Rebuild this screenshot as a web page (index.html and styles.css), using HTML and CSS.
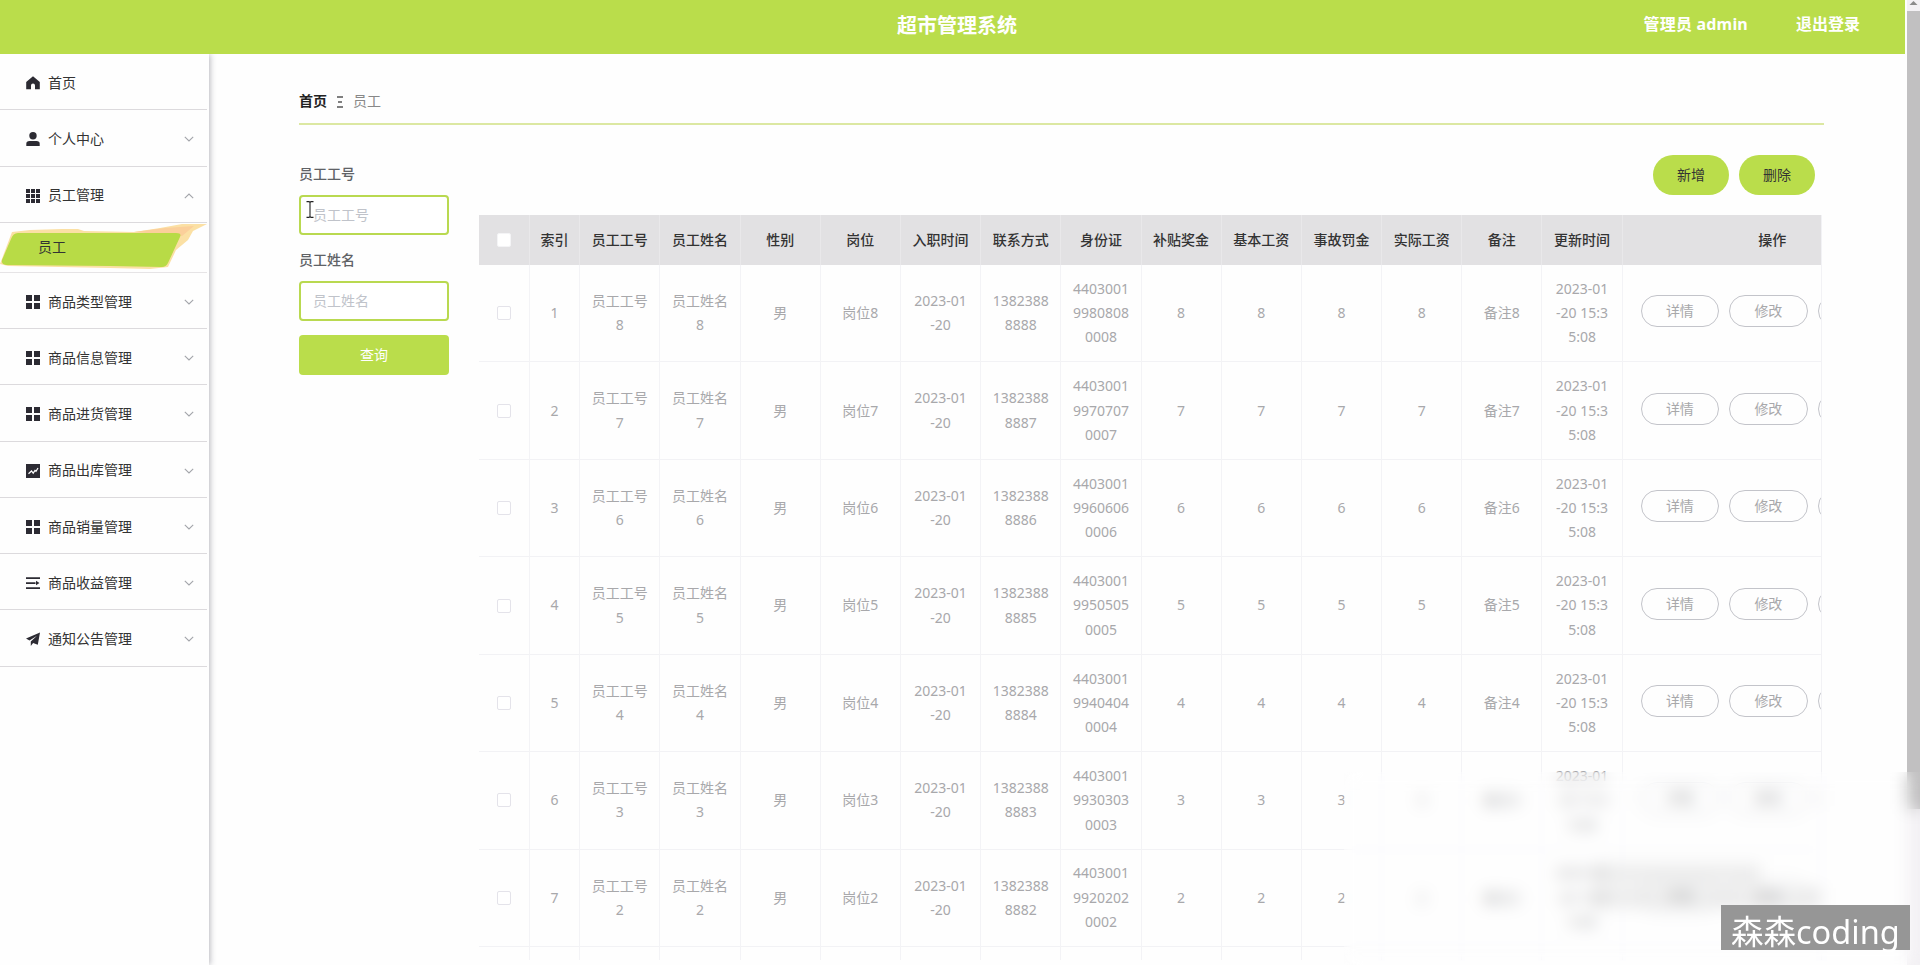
FILE: index.html
```html
<!DOCTYPE html>
<html lang="zh-CN">
<head>
<meta charset="utf-8">
<title>超市管理系统</title>
<link rel="stylesheet" href="styles.css">
</head>
<body>
<svg class="defs" aria-hidden="true">
  <symbol id="down" viewBox="0 0 10 6"><path d="M.8.8 5 5 9.200.8" fill="none" stroke="#a3a5aa" stroke-width="1.1"/></symbol>
  <symbol id="four" viewBox="0 0 14 14"><path d="M0 0h6v6H0zM8 0h6v6H8zM0 8h6v6H0zM8 8h6v6H8z"/></symbol>
</svg>
<header class="topbar">
  <div class="topbar-side"></div>
  <h1 class="brand">超市管理系统</h1>
  <div class="topbar-side account"><span>管理员 admin</span><span>退出登录</span></div>
</header>
<div class="layout">
  <nav class="sidebar">
    <div class="item"><svg class="icon" viewBox="0 0 14 14"><path d="M7 .3 13.800 6v7.200H9V9.500a2 2 0 0 0-4 0v3.700H.2V6z"/></svg><span>首页</span></div>
    <div class="item"><svg class="icon" viewBox="0 0 14 14"><circle cx="7" cy="3.700" r="3.700"/><path d="M.3 14v-2.200Q.3 9 3.500 9h7q3.200 0 3.200 2.800V14z"/></svg><span>个人中心</span><svg class="arrow"><use href="#down"/></svg></div>
    <div class="item"><svg class="icon" viewBox="0 0 14 14"><path d="M0 0h4v4H0zM5 0h4v4H5zM10 0h4v4h-4zM0 5h4v4H0zM5 5h4v4H5zM10 5h4v4h-4zM0 10h4v4H0zM5 10h4v4H5zM10 10h4v4h-4z"/></svg><span>员工管理</span><svg class="arrow up"><use href="#down"/></svg></div>
    <div class="subitem">
      <svg class="splash" viewBox="0 0 209 50">
        <path d="M12 9 30 7 62 6 78 6 84 8 134 9 160 5 182 1 207 1 193 8 188 17 176 27 168 44 150 46 110 45 8 43 0 41z" fill="#fbe0a4"/>
        <path d="M134 9 165 5 194 3 182 13 170 12z" fill="#fbcf9a"/>
        <path d="M18 10H176Q182 10 180 14L168 40Q166 44 162 44L110 43 6 42Q1 41 2 37L11 16Q13 10 18 10z" fill="#b8db46"/>
      </svg>
      <span>员工</span>
    </div>
    <div class="item"><svg class="icon"><use href="#four"/></svg><span>商品类型管理</span><svg class="arrow"><use href="#down"/></svg></div>
    <div class="item"><svg class="icon"><use href="#four"/></svg><span>商品信息管理</span><svg class="arrow"><use href="#down"/></svg></div>
    <div class="item"><svg class="icon"><use href="#four"/></svg><span>商品进货管理</span><svg class="arrow"><use href="#down"/></svg></div>
    <div class="item"><svg class="icon" viewBox="0 0 14 14"><path d="M0 0h14v14H0z"/><path d="M2.500 9.800 5.500 7l1.700 2.200L9 6.500l1 .8L12 4" fill="none" stroke="#fff" stroke-width="1.200"/></svg><span>商品出库管理</span><svg class="arrow"><use href="#down"/></svg></div>
    <div class="item"><svg class="icon"><use href="#four"/></svg><span>商品销量管理</span><svg class="arrow"><use href="#down"/></svg></div>
    <div class="item"><svg class="icon" viewBox="0 0 14 14"><path d="M0 1.200h14v1.800H0zM0 6.200h9.500v1.800H0zM0 11.200h14v1.800H0zM10 4.800 13.500 7 10 9.200z"/></svg><span>商品收益管理</span><svg class="arrow"><use href="#down"/></svg></div>
    <div class="item"><svg class="icon" viewBox="0 0 14 14"><path d="M14 .5 0 6.500l3.500 2L11 3.800 4.800 9.500V14l2.300-3 4.700 1.800z"/></svg><span>通知公告管理</span><svg class="arrow"><use href="#down"/></svg></div>
  </nav>
  <main class="main">
    <div class="crumbs"><b>首页</b><svg class="sep" viewBox="0 0 6 12"><path d="M0 1h6M1 6h4M0 11h6" stroke="#555" stroke-width="1.300"/></svg><span>员工</span></div>
    <div class="content">
      <form class="search">
        <label>员工工号</label>
        <div class="field">员工工号
          <svg class="cursor" viewBox="0 0 8 17"><path d="M.5.600H3L4 1.500 5 .600h2.500M4 1.500v14M.5 16.400H3l1-.900 1 .900h2.500" fill="none" stroke="#222" stroke-width="1.100"/></svg>
        </div>
        <label>员工姓名</label>
        <div class="field">员工姓名</div>
        <div class="query">查询</div>
      </form>
      <section class="list">
        <div class="actions"><span class="pill">新增</span><span class="pill">删除</span></div>
        <div class="table-clip">
          <table>
            <colgroup><col class="first"><col class="narrow"><col span="13" class="mid"><col class="wide"></colgroup>
            <thead><tr><th><i class="check"></i></th><th>索引</th><th>员工工号</th><th>员工姓名</th><th>性别</th><th>岗位</th><th>入职时间</th><th>联系方式</th><th>身份证</th><th>补贴奖金</th><th>基本工资</th><th>事故罚金</th><th>实际工资</th><th>备注</th><th>更新时间</th><th>操作</th></tr></thead>
            <tbody>
              <tr><td><i class="check"></i></td><td>1</td><td>员工工号<br>8</td><td>员工姓名<br>8</td><td>男</td><td>岗位8</td><td>2023-01<br>-20</td><td>1382388<br>8888</td><td>4403001<br>9980808<br>0008</td><td>8</td><td>8</td><td>8</td><td>8</td><td>备注8</td><td>2023-01<br>-20 15:3<br>5:08</td><td><div class="ops"><span>详情</span><span>修改</span><span></span></div></td></tr>
              <tr><td><i class="check"></i></td><td>2</td><td>员工工号<br>7</td><td>员工姓名<br>7</td><td>男</td><td>岗位7</td><td>2023-01<br>-20</td><td>1382388<br>8887</td><td>4403001<br>9970707<br>0007</td><td>7</td><td>7</td><td>7</td><td>7</td><td>备注7</td><td>2023-01<br>-20 15:3<br>5:08</td><td><div class="ops"><span>详情</span><span>修改</span><span></span></div></td></tr>
              <tr><td><i class="check"></i></td><td>3</td><td>员工工号<br>6</td><td>员工姓名<br>6</td><td>男</td><td>岗位6</td><td>2023-01<br>-20</td><td>1382388<br>8886</td><td>4403001<br>9960606<br>0006</td><td>6</td><td>6</td><td>6</td><td>6</td><td>备注6</td><td>2023-01<br>-20 15:3<br>5:08</td><td><div class="ops"><span>详情</span><span>修改</span><span></span></div></td></tr>
              <tr><td><i class="check"></i></td><td>4</td><td>员工工号<br>5</td><td>员工姓名<br>5</td><td>男</td><td>岗位5</td><td>2023-01<br>-20</td><td>1382388<br>8885</td><td>4403001<br>9950505<br>0005</td><td>5</td><td>5</td><td>5</td><td>5</td><td>备注5</td><td>2023-01<br>-20 15:3<br>5:08</td><td><div class="ops"><span>详情</span><span>修改</span><span></span></div></td></tr>
              <tr><td><i class="check"></i></td><td>5</td><td>员工工号<br>4</td><td>员工姓名<br>4</td><td>男</td><td>岗位4</td><td>2023-01<br>-20</td><td>1382388<br>8884</td><td>4403001<br>9940404<br>0004</td><td>4</td><td>4</td><td>4</td><td>4</td><td>备注4</td><td>2023-01<br>-20 15:3<br>5:08</td><td><div class="ops"><span>详情</span><span>修改</span><span></span></div></td></tr>
              <tr><td><i class="check"></i></td><td>6</td><td>员工工号<br>3</td><td>员工姓名<br>3</td><td>男</td><td>岗位3</td><td>2023-01<br>-20</td><td>1382388<br>8883</td><td>4403001<br>9930303<br>0003</td><td>3</td><td>3</td><td>3</td><td>3</td><td>备注3</td><td>2023-01<br>-20 15:3<br>5:08</td><td><div class="ops"><span>详情</span><span>修改</span><span></span></div></td></tr>
              <tr><td><i class="check"></i></td><td>7</td><td>员工工号<br>2</td><td>员工姓名<br>2</td><td>男</td><td>岗位2</td><td>2023-01<br>-20</td><td>1382388<br>8882</td><td>4403001<br>9920202<br>0002</td><td>2</td><td>2</td><td>2</td><td>2</td><td>备注2</td><td>2023-01<br>-20 15:3<br>5:08</td><td><div class="ops"><span>详情</span><span>修改</span><span></span></div></td></tr>
              <tr><td></td><td></td><td></td><td></td><td></td><td></td><td></td><td></td><td></td><td></td><td></td><td></td><td></td><td></td><td></td><td></td></tr>
            </tbody>
          </table>
        </div>
      </section>
    </div>
  </main>
</div>
<div class="scrollbar"><svg class="scroll-arrow" viewBox="0 0 13 11"><path d="M2.500 5 6.500 1l4 4z" fill="#8b8b8b"/></svg><div class="thumb"></div></div>
<div class="smudge smudge-a"></div>
<div class="smudge smudge-b"></div>
<div class="haze"></div>
<div class="watermark">森森coding</div>
</body>
</html>
```
FILE: styles.css
```css
* { box-sizing: border-box; }
body {
  margin: 0;
  width: 1920px;
  height: 965px;
  overflow: hidden;
  position: relative;
  background: #fefefe;
  color: #333;
  font: 14px/24.3px "Noto Sans", "Noto Sans CJK SC", sans-serif;
}
.defs { position: absolute; width: 0; height: 0; }

.topbar {
  display: flex;
  align-items: center;
  width: 1905px;
  height: 54px;
  padding: 0 45px 5px 54px;
  background: #badd4b;
  color: #fff;
}
.topbar-side { flex: 1; }
.brand { margin: 0; padding-top: 2px; font-size: 20px; line-height: 28px; font-weight: 700; }
.account {
  display: flex;
  justify-content: flex-end;
  gap: 48px;
  font-size: 16px;
  font-weight: 700;
}
.account span:first-child { letter-spacing: .2px; }

.layout { display: flex; height: 911px; }
.sidebar {
  width: 209px;
  flex: none;
  padding-right: 2px;
  background: #fefefe;
  box-shadow: 1px 0 6px rgba(40, 40, 60, .34);
  clip-path: inset(0 -14px 0 0);
}
.item {
  display: flex;
  align-items: center;
  height: 56.25px;
  padding: 3px 13px 0 26px;
  border-bottom: 1px solid #dcdadd;
}
.icon { width: 14px; height: 14px; margin-right: 8px; fill: #2c2b33; }
.arrow { width: 10px; height: 6px; margin-left: auto; }
.arrow.up { transform: rotate(180deg); }
.subitem {
  position: relative;
  height: 50px;
  padding: 12px 0 0 38px;
  border-bottom: 1px solid #e6e4e6;
}
.subitem span { position: relative; }
.splash { position: absolute; left: 0; top: 0; width: 209px; height: 50px; }

.main { width: 1696px; padding: 32px 81px 0 90px; }
.crumbs {
  display: flex;
  align-items: center;
  width: 1525px;
  height: 39px;
  padding-bottom: 6px;
  border-bottom: 2px solid #dce8a2;
  color: #888;
}
.crumbs b { color: #222; }
.sep { width: 6px; height: 12px; margin: 0 10px 0 10px; }
.content { display: flex; gap: 30px; padding-top: 30px; }

.search { display: flex; flex-direction: column; width: 150px; padding-top: 6px; }
.search label { height: 34px; padding-top: 1px; font-weight: 500; color: #606266; }
.field {
  position: relative;
  height: 40px;
  margin-bottom: 11.500px;
  padding: 6px 12px;
  border: 2px solid #b9d950;
  border-radius: 4px;
  background: #fff;
  color: #c0c3ca;
}
.cursor { position: absolute; left: 5px; top: 4px; width: 8px; height: 17px; }
.query {
  height: 40px;
  margin-top: 3px;
  border-radius: 4px;
  background: #badd4b;
  color: #fff;
  line-height: 40px;
  text-align: center;
}

.actions { display: flex; justify-content: flex-end; gap: 10px; height: 60px; padding-right: 7px; }
.pill {
  width: 76px;
  height: 40px;
  border-radius: 20px;
  background: #badd4b;
  line-height: 39px;
  text-align: center;
}
.table-clip { width: 1343px; height: 745px; overflow: hidden; border-right: 1px solid #f2f2f5; }
table { width: 1443.800px; table-layout: fixed; border-collapse: separate; border-spacing: 0; }
.first { width: 51px; }
.narrow { width: 50.200px; }
.mid { width: 80.200px; }
.wide { width: 300px; }
th, td { padding: 0; text-align: center; vertical-align: middle; }
th {
  height: 50px;
  background: #e2e1e3;
  border-right: 1px solid #e9e8ea;
  color: #333;
  font-weight: 500;
}
td {
  height: 97.450px;
  border-right: 1px solid #f3f3f6;
  border-bottom: 1px solid #f2f2f5;
  color: #a8a8ab;
}
.check {
  display: block;
  width: 14px;
  height: 14px;
  margin: 0 auto;
  border: 1px solid #e4e3ea;
  border-radius: 2px;
  background: #fff;
}
th .check { border-color: #f4f4f6; }
.ops { display: flex; gap: 10px; width: 299px; padding: 0 0 4px 18px; }
.ops span {
  flex: none;
  width: 78.500px;
  height: 32px;
  border: 1px solid #c3c4ca;
  border-radius: 16px;
  line-height: 30px;
}

.scrollbar {
  position: absolute;
  right: 0;
  top: 0;
  display: flex;
  flex-direction: column;
  width: 13px;
  height: 965px;
  background: #f3f1f4;
}
.scroll-arrow { width: 13px; height: 11px; }
.thumb { height: 798px; background: #c1c0c1; }

/* Frosted strip over the lower right corner */
.haze {
  position: absolute;
  left: 1344px;
  top: 772px;
  width: 576px;
  height: 193px;
  backdrop-filter: blur(8px);
}
.smudge { position: absolute; background: #bbb; opacity: .25; }
.smudge-a { left: 1594px; top: 864px; width: 166px; height: 20px; }
.smudge-b { left: 1592px; top: 888px; width: 228px; height: 20px; }
.watermark {
  position: absolute;
  left: 1721px;
  top: 905px;
  width: 189px;
  height: 45px;
  padding-left: 10px;
  background: #969696;
  color: #fff;
  font-size: 32.500px;
  line-height: 53px;
  white-space: nowrap;
}
```
